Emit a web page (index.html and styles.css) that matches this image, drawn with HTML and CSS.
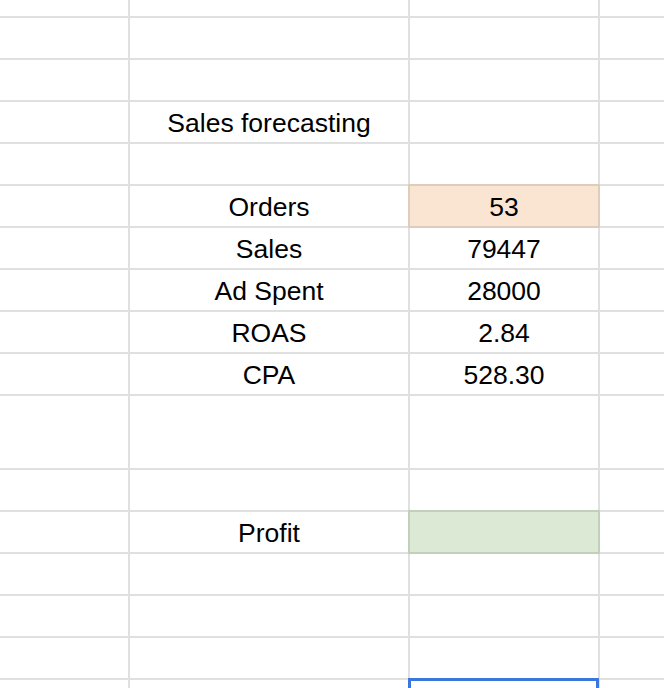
FILE: index.html
```html
<!DOCTYPE html>
<html lang="en">
<head>
<meta charset="utf-8">
<title>Sales forecasting</title>
<link rel="stylesheet" href="styles.css">
</head>
<body>
<div class="sheet">
  <!-- row 0 (partial) -->
  <div class="c"></div><div class="c"></div><div class="c"></div><div class="c d"></div>
  <!-- row 1 -->
  <div class="c"></div><div class="c"></div><div class="c"></div><div class="c d"></div>
  <!-- row 2 -->
  <div class="c"></div><div class="c"></div><div class="c"></div><div class="c d"></div>
  <!-- row 3 -->
  <div class="c"></div><div class="c t">Sales forecasting</div><div class="c"></div><div class="c d"></div>
  <!-- row 4 -->
  <div class="c"></div><div class="c"></div><div class="c"></div><div class="c d"></div>
  <!-- row 5 -->
  <div class="c"></div><div class="c t">Orders</div><div class="c t fill-orange">53</div><div class="c d"></div>
  <!-- row 6 -->
  <div class="c"></div><div class="c t">Sales</div><div class="c t">79447</div><div class="c d"></div>
  <!-- row 7 -->
  <div class="c"></div><div class="c t">Ad Spent</div><div class="c t">28000</div><div class="c d"></div>
  <!-- row 8 -->
  <div class="c"></div><div class="c t">ROAS</div><div class="c t">2.84</div><div class="c d"></div>
  <!-- row 9 -->
  <div class="c"></div><div class="c t">CPA</div><div class="c t">528.30</div><div class="c d"></div>
  <!-- row 10 (tall) -->
  <div class="c"></div><div class="c"></div><div class="c"></div><div class="c d"></div>
  <!-- row 11 -->
  <div class="c"></div><div class="c"></div><div class="c"></div><div class="c d"></div>
  <!-- row 12 -->
  <div class="c"></div><div class="c t">Profit</div><div class="c t fill-green"></div><div class="c d"></div>
  <!-- row 13 -->
  <div class="c"></div><div class="c"></div><div class="c"></div><div class="c d"></div>
  <!-- row 14 -->
  <div class="c"></div><div class="c"></div><div class="c"></div><div class="c d"></div>
  <!-- row 15 -->
  <div class="c"></div><div class="c"></div><div class="c"></div><div class="c d"></div>
  <!-- row 16 (partial) -->
  <div class="c last"></div><div class="c last"></div><div class="c last selected"></div><div class="c d last"></div>
</div>
</body>
</html>
```

FILE: styles.css
```css
html, body {
  margin: 0;
  padding: 0;
  background: #ffffff;
  overflow: hidden;
}

body {
  width: 664px;
  height: 688px;
  font-family: "Liberation Sans", Arial, Helvetica, sans-serif;
  color: #000000;
}

.sheet {
  display: grid;
  grid-template-columns: 130px 280px 190px 1fr;
  grid-template-rows: 18px repeat(9, 42px) 74px repeat(5, 42px) 1fr;
  width: 664px;
  height: 688px;
}

.c {
  box-sizing: border-box;
  border-right: 2px solid #e0e0e0;
  border-bottom: 2px solid #e0e0e0;
  min-width: 0;
}

.c.d {
  border-right: none;
}

.c.last {
  border-bottom: none;
}

.t {
  font-size: 26.5px;
  line-height: 38px;
  padding-top: 2px;
  text-align: center;
  white-space: nowrap;
  overflow: visible;
}

.fill-orange {
  background: #f9e5d2;
  border-color: #dfcdbb;
  box-shadow: -2px 0 0 #dfcdbb, 0 -2px 0 #dfcdbb, -2px -2px 0 #dfcdbb;
}

.fill-green {
  background: #dce9d5;
  border-color: #c2cfbc;
  box-shadow: -2px 0 0 #c2cfbc, 0 -2px 0 #c2cfbc, -2px -2px 0 #c2cfbc;
}

.selected {
  position: relative;
}

.selected::after {
  content: "";
  position: absolute;
  left: -2px;
  top: -2px;
  right: -1px;
  bottom: -20px;
  border: 3px solid #3b76db;
}
```
